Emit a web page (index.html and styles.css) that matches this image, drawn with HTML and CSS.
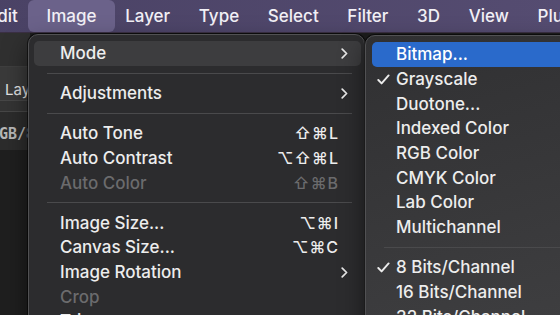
FILE: index.html
```html
<!DOCTYPE html>
<html lang="en">
<head>
    <meta charset="UTF-8">
    <meta name="viewport" content="width=device-width, initial-scale=1.0">
    <title>Image Menu</title>
    <link rel="stylesheet" href="styles.css">
</head>
<body>

<!-- top menu bar -->
<div class="menubar">
    <span class="bar-item">Edit</span>
    <span class="bar-item active">Image</span>
    <span class="bar-item">Layer</span>
    <span class="bar-item">Type</span>
    <span class="bar-item">Select</span>
    <span class="bar-item">Filter</span>
    <span class="bar-item">3D</span>
    <span class="bar-item">View</span>
    <span class="bar-item">Plugins</span>
</div>

<!-- app panels behind the menus -->
<div class="workspace">
    <div class="side">
        <div class="band band-top"></div>
        <div class="band band-tab"><span class="tab-label">Layers</span></div>
        <div class="band band-thin"></div>
        <div class="band band-doc"><span class="doc-label">RGB/8#</span></div>
        <div class="band band-rest"></div>
    </div>
</div>

<!-- Image menu -->
<div class="menu">
    <div class="item hover"><span class="label">Mode</span><span class="chev"><svg width="7" height="11" viewBox="0 0 7 11"><path d="M1.2 1.2 L5.6 5.5 L1.2 9.8" fill="none" stroke="#e8e8e8" stroke-width="1.7" stroke-linecap="round" stroke-linejoin="round"/></svg></span></div>
    <div class="sep"></div>
    <div class="item"><span class="label">Adjustments</span><span class="chev"><svg width="7" height="11" viewBox="0 0 7 11"><path d="M1.2 1.2 L5.6 5.5 L1.2 9.8" fill="none" stroke="#e8e8e8" stroke-width="1.7" stroke-linecap="round" stroke-linejoin="round"/></svg></span></div>
    <div class="sep"></div>
    <div class="item"><span class="label">Auto Tone</span><span class="keys">⇧⌘L</span></div>
    <div class="item"><span class="label">Auto Contrast</span><span class="keys">⌥⇧⌘L</span></div>
    <div class="item disabled"><span class="label">Auto Color</span><span class="keys">⇧⌘B</span></div>
    <div class="sep"></div>
    <div class="item"><span class="label">Image Size...</span><span class="keys">⌥⌘I</span></div>
    <div class="item"><span class="label">Canvas Size...</span><span class="keys">⌥⌘C</span></div>
    <div class="item"><span class="label">Image Rotation</span><span class="chev"><svg width="7" height="11" viewBox="0 0 7 11"><path d="M1.2 1.2 L5.6 5.5 L1.2 9.8" fill="none" stroke="#e8e8e8" stroke-width="1.7" stroke-linecap="round" stroke-linejoin="round"/></svg></span></div>
    <div class="item disabled"><span class="label">Crop</span></div>
    <div class="item"><span class="label">Trim...</span></div>
</div>

<!-- Mode submenu -->
<div class="submenu">
    <div class="item selected"><span class="check"></span><span class="label">Bitmap...</span></div>
    <div class="item"><span class="check"><svg width="13" height="11" viewBox="0 0 13 11"><path d="M1.3 6 L4.6 9.4 L11.6 1.4" fill="none" stroke="#ececec" stroke-width="1.9" stroke-linecap="round" stroke-linejoin="round"/></svg></span><span class="label">Grayscale</span></div>
    <div class="item"><span class="check"></span><span class="label">Duotone...</span></div>
    <div class="item"><span class="check"></span><span class="label">Indexed Color</span></div>
    <div class="item"><span class="check"></span><span class="label">RGB Color</span></div>
    <div class="item"><span class="check"></span><span class="label">CMYK Color</span></div>
    <div class="item"><span class="check"></span><span class="label">Lab Color</span></div>
    <div class="item"><span class="check"></span><span class="label">Multichannel</span></div>
    <div class="sep"></div>
    <div class="item"><span class="check"><svg width="13" height="11" viewBox="0 0 13 11"><path d="M1.3 6 L4.6 9.4 L11.6 1.4" fill="none" stroke="#ececec" stroke-width="1.9" stroke-linecap="round" stroke-linejoin="round"/></svg></span><span class="label">8 Bits/Channel</span></div>
    <div class="item"><span class="check"></span><span class="label">16 Bits/Channel</span></div>
    <div class="item"><span class="check"></span><span class="label">32 Bits/Channel</span></div>
</div>

</body>
</html>
```

FILE: styles.css
```css
body {
    margin: 0;
    width: 560px;
    height: 315px;
    overflow: hidden;
    position: relative;
    background-color: #1e1e1e;
    font-family: Inter, "Noto Sans", sans-serif;
    color: #ededed;
}

/* menu bar */
.menubar {
    height: 33px;
    display: flex;
    align-items: center;
    gap: 28.7px;
    margin-left: -13px;
    background: linear-gradient(90deg, #4a4265, #554c71);
    border-bottom: 1px solid #3b3044;
    box-sizing: border-box;
    font-size: 17px;
    font-weight: 500;
    color: #f2f0f6;
    white-space: nowrap;
}
.bar-item.active {
    padding: 0 19px;
    margin: 0 -19px;
    height: 32px;
    line-height: 32px;
    align-self: flex-start;
    background-color: #6b628a;
    border-radius: 6px;
}

/* panels behind */
.workspace {
    display: flex;
    height: 282px;
}
.side {
    width: 30px;
    display: flex;
    flex-direction: column;
    overflow: hidden;
}
.band-top {
    height: 33px;
    background-color: #303030;
    border-bottom: 1px solid #3f3f3f;
}
.band-tab {
    height: 33px;
    background-color: #3a3a3a;
    display: flex;
    align-items: center;
    padding-top: 11px;
    box-sizing: border-box;
}
.tab-label {
    padding-left: 5px;
    font-size: 15px;
    color: #e2e2e2;
    white-space: nowrap;
}
.band-thin {
    height: 10px;
    background-color: #343434;
    border-top: 1px solid #474747;
    border-bottom: 1px solid #474747;
}
.band-doc {
    height: 38px;
    background-color: #2c2c2c;
    display: flex;
    align-items: center;
    padding-top: 6px;
    box-sizing: border-box;
}
.doc-label {
    margin-left: -10px;
    font-family: "DejaVu Sans Mono", monospace;
    font-weight: bold;
    font-size: 15px;
    color: #b8b8b8;
    white-space: nowrap;
}
.band-rest {
    flex: 1;
    background-color: #1f1f1f;
}

/* dropdown menus */
.menu, .submenu {
    position: absolute;
    box-sizing: border-box;
    border: 1px solid #515153;
    border-radius: 10px;
    box-shadow: 0 0 0 1px rgba(0, 0, 0, 0.55), 0 10px 24px rgba(0, 0, 0, 0.5);
    font-size: 17px;
    font-weight: 500;
    white-space: nowrap;
}
.menu {
    left: 28px;
    top: 34px;
    width: 337px;
    height: 310px;
    padding: 6px 3px 0 5px;
    background-color: #2c2c2e;
}
.submenu {
    left: 365px;
    top: 35px;
    width: 210px;
    height: 310px;
    padding: 6px 0 0 6px;
    background: linear-gradient(165deg, #303032, #3f3f41);
}

.item {
    height: 24.7px;
    display: flex;
    align-items: center;
    border-radius: 5px;
}
.menu .item {
    padding: 0 13px 0 26px;
}
.item .label {
    flex: 1;
}
.item.hover {
    background-color: #3d3d3f;
}
.item.disabled {
    color: #6b6b6d;
}
.keys {
    margin-right: 9px;
    font-size: 16px;
    letter-spacing: 1px;
}
.chev {
    display: flex;
    width: 7px;
}

.sep {
    height: 15.3px;
    display: flex;
    align-items: center;
}
.sep::before {
    content: "";
    flex: 1;
    height: 1px;
    background-color: #4a4a4c;
}
.menu .sep {
    margin: 0 9px 0 13px;
}
.submenu .sep {
    margin-left: 12px;
}

.submenu .item {
    padding-left: 5px;
}
.check {
    width: 19px;
    display: flex;
    align-items: center;
}
.submenu .item.selected {
    background-color: #2a6acb;
    color: #ffffff;
}
```
